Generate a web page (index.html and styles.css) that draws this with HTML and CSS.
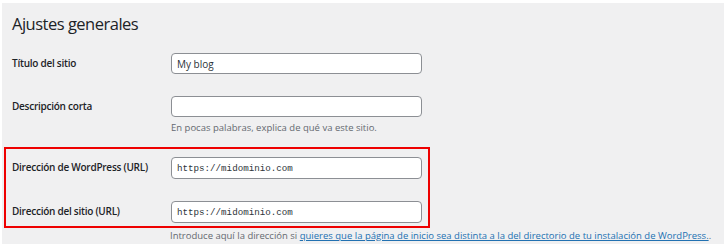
FILE: index.html
```html
<!DOCTYPE html>
<html lang="es">
<head>
  <meta charset="UTF-8" />
  <title>Ajustes generales</title>
  <meta name="viewport" content="width=device-width, initial-scale=1.0" />
  <link rel="stylesheet" href="styles.css">
</head>
<body>
  <div class="wrap">
    <h1 class="page-title">Ajustes generales</h1>

    <div class="form-row row-title">
      <label class="field-label" for="blogname">Título del sitio</label>
      <div class="field">
        <input class="text-input" id="blogname" type="text" value="My blog" />
      </div>
    </div>

    <div class="form-row row-tagline">
      <label class="field-label" for="tagline">Descripción corta</label>
      <div class="field">
        <input class="text-input" id="tagline" type="text" value="" />
        <p class="description">En pocas palabras, explica de qué va este sitio.</p>
      </div>
    </div>

    <div class="highlight">
      <div class="form-row row-url">
        <label class="field-label" for="siteurl">Dirección de WordPress (URL)</label>
        <div class="field">
          <input class="text-input code" id="siteurl" type="url" value="https://midominio.com" />
        </div>
      </div>
      <div class="form-row row-home">
        <label class="field-label" for="home">Dirección del sitio (URL)</label>
        <div class="field">
          <input class="text-input code" id="home" type="url" value="https://midominio.com" />
        </div>
      </div>
    </div>

    <p class="description home-note">Introduce aquí la dirección si <a href="#">quieres que la página de inicio sea distinta a la del directorio de tu instalación de WordPress.</a>.</p>
  </div>
</body>
</html>
```

FILE: styles.css
```css
* {
  box-sizing: border-box;
}

html, body {
  margin: 0;
  padding: 0;
  background: #ffffff;
  font-family: 'Open Sans', 'Noto Sans', sans-serif;
  color: #1d2327;
}

.wrap {
  margin: 3px 4px 0 2px;
  height: 241px;
  padding: 9px 0 0 10px;
  background: #f0f0f1;
}

.page-title {
  margin: 0;
  font-size: 16.5px;
  line-height: 24px;
  font-weight: 400;
  letter-spacing: -0.5px;
  color: #1d2327;
}

.form-row {
  display: flex;
  align-items: flex-start;
}

.row-title {
  margin-top: 17px;
}

.row-tagline {
  margin-top: 22px;
}

.row-home {
  margin-top: 22px;
}

.field-label {
  flex: 0 0 159px;
  font-size: 10px;
  line-height: 21px;
  font-weight: 600;
  letter-spacing: -0.25px;
  color: #1d2327;
}

.field {
  flex: 1;
}

.text-input {
  display: block;
  width: 251px;
  height: 21px;
  margin: 0;
  padding: 0 5px;
  border: 1px solid #8c8f94;
  border-radius: 4px;
  background: #ffffff;
  font-family: 'Open Sans', 'Noto Sans', sans-serif;
  font-size: 10px;
  color: #2c3338;
  outline: none;
}

.text-input.code {
  height: 22px;
  font-family: 'Liberation Mono', 'DejaVu Sans Mono', monospace;
  font-size: 9.2px;
}

.description {
  margin: 3px 0 0;
  font-size: 9.5px;
  line-height: 15px;
  color: #646970;
}

.highlight {
  margin: 14px 0 0 -6px;
  padding: 8px 0 3px 6px;
  width: 422px;
  outline: 2px solid #ee0000;
}

.home-note {
  margin: 2px 0 0 158px;
}

.home-note a {
  color: #2271b1;
  text-decoration: underline;
}
```
